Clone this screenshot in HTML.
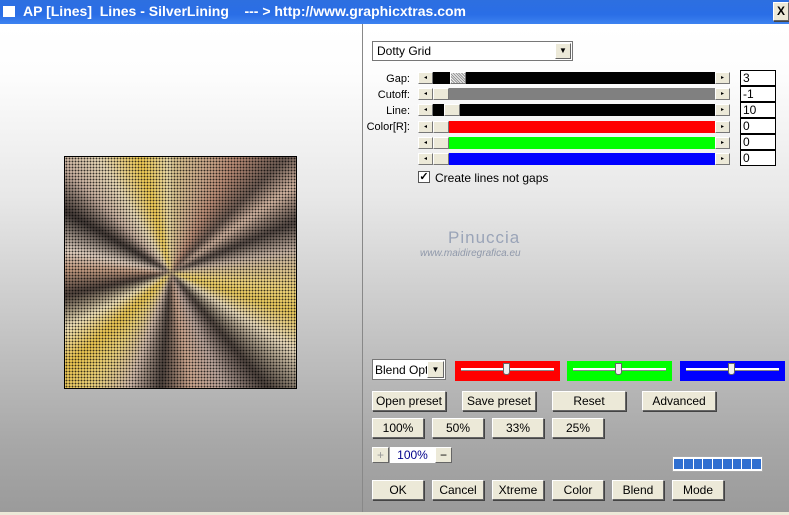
<!DOCTYPE html>
<html><head><style>
*{margin:0;padding:0;box-sizing:border-box}
body{width:789px;height:515px;overflow:hidden;font-family:"Liberation Sans",sans-serif;font-size:11px;position:relative;background:#999}
.abs{position:absolute}
#title{left:0;top:0;width:789px;height:24px;background:linear-gradient(#2d6fe0,#2a6ee6 60%,#3d82f0);color:#fff;font-size:14px;font-weight:bold}
.panel{top:24px;height:491px;background:linear-gradient(#fff 0%,#fdfdfd 10%,#e8e8e8 35%,#c8c8c8 60%,#a8a8a8 85%,#9a9a9a 100%)}
#img{left:64px;top:156px;width:233px;height:233px;border:1px solid #000;overflow:hidden;
background:#e0cfb0}
#img:before{content:"";position:absolute;inset:-4px;filter:blur(1.5px);background:conic-gradient(from 0deg at 46% 50%,
#d9c58f 0deg,#c9a78a 18deg,#b78a74 30deg,#6b5a52 45deg,#d2b4a0 55deg,#4e4440 68deg,#c7b3a3 80deg,#eed27a 98deg,#e6c65a 108deg,#e8d9bb 122deg,#4a403b 140deg,#b8a39a 155deg,#caa48c 170deg,#4a403b 185deg,#cfb8a8 200deg,#e8cf7a 215deg,#e7c24d 228deg,#efe0b8 242deg,#4b3f3a 258deg,#c29a80 272deg,#e0cfc0 282deg,#3d3532 300deg,#c8b0a0 315deg,#e6d7b5 328deg,#ecc750 345deg,#e8dab0 360deg)}
#img:after{content:"";position:absolute;inset:0;background:radial-gradient(circle,rgba(0,0,0,.75) 0.7px,transparent 1.1px) 0 0/3px 3px}
.lbl{text-align:right;width:60px;left:350px;font-size:11px}
.trk{left:418px;width:312px;height:12px}
.arr{width:15px;height:12px;background:#ece9d8;border:1px solid;border-color:#fff #777 #777 #fff;top:0;font-size:6px;text-align:center;line-height:10px}
.thumb{top:0;height:12px;width:16px;background:#ece9d8;border:1px solid;border-color:#fff #777 #777 #fff}
.tb{left:740px;width:36px;height:16px;background:#fff;border:1px solid #000;font-size:12px;padding-left:2px;line-height:14px}
.btn{height:20px;background:#ece9d8;border:1px solid;border-color:#fff #666 #666 #fff;box-shadow:1px 1px 0 #444;text-align:center;font-size:12px;line-height:18px}
.cs{height:20px;top:361px}
.cs i{position:absolute;left:6px;right:6px;top:7px;height:3px;background:#fff;border-bottom:1px solid #888}
.cs b{position:absolute;top:2px;width:7px;height:12px;background:#eee;border:1px solid #666;border-radius:0 0 3px 3px}
</style></head><body>
<div id="title" class="abs"><div class="abs" style="left:3px;top:6px;width:12px;height:11px;background:#fff"></div><div class="abs" style="left:23px;top:3px">AP [Lines]&nbsp; Lines - SilverLining &nbsp;&nbsp; --- &gt; http://www.graphicxtras.com</div>
<div class="abs btn" style="left:773px;top:2px;width:16px;height:19px;font-weight:bold;font-size:12px;color:#000;line-height:17px">X</div></div>
<div class="panel abs" style="left:0;width:362px"></div>
<div class="abs" style="left:362px;top:24px;width:1px;height:491px;background:#888"></div>
<div class="panel abs" style="left:363px;width:426px"></div>
<div id="img" class="abs"></div>

<div class="abs" style="left:372px;top:41px;width:201px;height:20px;background:#fff;border:1px solid #777;font-size:12px;padding:2px 4px">Dotty Grid
<div class="abs btn" style="right:1px;top:1px;width:16px;height:16px;font-size:8px;line-height:14px;box-shadow:none">▼</div></div>

<div class="abs lbl" style="top:73px">Gap:</div>
<div class="abs lbl" style="top:89px">Cutoff:</div>
<div class="abs lbl" style="top:105px">Line:</div>
<div class="abs lbl" style="top:121px">Color[R]:</div>

<div class="abs trk" style="top:72px;background:#000"><div class="abs arr" style="left:0">◂</div><div class="abs thumb" style="left:32px;background:repeating-linear-gradient(45deg,#999 0 1px,#eee 1px 2px)"></div><div class="abs arr" style="right:0">▸</div></div>
<div class="abs trk" style="top:88px;background:#808080"><div class="abs arr" style="left:0">◂</div><div class="abs thumb" style="left:15px"></div><div class="abs arr" style="right:0">▸</div></div>
<div class="abs trk" style="top:104px;background:#000"><div class="abs arr" style="left:0">◂</div><div class="abs thumb" style="left:26px"></div><div class="abs arr" style="right:0">▸</div></div>
<div class="abs trk" style="top:121px;background:#f00"><div class="abs arr" style="left:0">◂</div><div class="abs thumb" style="left:15px"></div><div class="abs arr" style="right:0">▸</div></div>
<div class="abs trk" style="top:137px;background:#0f0"><div class="abs arr" style="left:0">◂</div><div class="abs thumb" style="left:15px"></div><div class="abs arr" style="right:0">▸</div></div>
<div class="abs trk" style="top:153px;background:#00f"><div class="abs arr" style="left:0">◂</div><div class="abs thumb" style="left:15px"></div><div class="abs arr" style="right:0">▸</div></div>

<div class="abs tb" style="top:70px">3</div>
<div class="abs tb" style="top:86px">-1</div>
<div class="abs tb" style="top:102px">10</div>
<div class="abs tb" style="top:118px">0</div>
<div class="abs tb" style="top:134px">0</div>
<div class="abs tb" style="top:150px">0</div>

<div class="abs" style="left:418px;top:171px;width:12px;height:12px;background:#fff;border:1px solid #555;font-size:11px;line-height:10px;text-align:center;font-weight:bold">✓</div>
<div class="abs" style="left:435px;top:171px;font-size:12px">Create lines not gaps</div>

<div class="abs" style="left:448px;top:228px;font-size:17px;color:#9aa4b8;letter-spacing:1px">Pinuccia</div>
<div class="abs" style="left:420px;top:248px;font-size:10px;color:#8f98aa;font-style:italic">www.maidiregrafica.eu</div>

<div class="abs" style="left:372px;top:359px;width:74px;height:21px;background:#fff;border:1px solid #777;font-size:12px;padding:3px 2px;overflow:hidden;white-space:nowrap">Blend Opti
<div class="abs btn" style="right:1px;top:1px;width:17px;height:17px;font-size:8px;line-height:15px;box-shadow:none">▼</div></div>
<div class="abs cs" style="left:455px;width:105px;background:#f00"><i></i><b style="left:48px"></b></div>
<div class="abs cs" style="left:567px;width:105px;background:#0f0"><i></i><b style="left:48px"></b></div>
<div class="abs cs" style="left:680px;width:105px;background:#00f"><i></i><b style="left:48px"></b></div>

<div class="abs btn" style="left:372px;top:391px;width:74px">Open preset</div>
<div class="abs btn" style="left:462px;top:391px;width:74px">Save preset</div>
<div class="abs btn" style="left:552px;top:391px;width:74px">Reset</div>
<div class="abs btn" style="left:642px;top:391px;width:74px">Advanced</div>

<div class="abs btn" style="left:372px;top:418px;width:52px">100%</div>
<div class="abs btn" style="left:432px;top:418px;width:52px">50%</div>
<div class="abs btn" style="left:492px;top:418px;width:52px">33%</div>
<div class="abs btn" style="left:552px;top:418px;width:52px">25%</div>

<div class="abs btn" style="left:372px;top:447px;width:17px;height:16px;line-height:14px;color:#999;box-shadow:none">+</div>
<div class="abs" style="left:390px;top:447px;width:45px;height:16px;background:#fff;color:#00008b;font-size:12px;text-align:center;line-height:16px">100%</div>
<div class="abs btn" style="left:435px;top:447px;width:17px;height:16px;line-height:14px;box-shadow:none">−</div>

<div class="abs" style="left:672px;top:456px;width:91px;height:16px;background:#fff;border:1px solid #aaa;padding:2px 1px;display:flex;gap:1px">
<span style="flex:1;background:#2f6fd0"></span><span style="flex:1;background:#2f6fd0"></span><span style="flex:1;background:#2f6fd0"></span><span style="flex:1;background:#2f6fd0"></span><span style="flex:1;background:#2f6fd0"></span><span style="flex:1;background:#2f6fd0"></span><span style="flex:1;background:#2f6fd0"></span><span style="flex:1;background:#2f6fd0"></span><span style="flex:1;background:#2f6fd0"></span></div>

<div class="abs btn" style="left:372px;top:480px;width:52px">OK</div>
<div class="abs btn" style="left:432px;top:480px;width:52px">Cancel</div>
<div class="abs btn" style="left:492px;top:480px;width:52px">Xtreme</div>
<div class="abs btn" style="left:552px;top:480px;width:52px">Color</div>
<div class="abs btn" style="left:612px;top:480px;width:52px">Blend</div>
<div class="abs btn" style="left:672px;top:480px;width:52px">Mode</div>
<div class="abs" style="left:0;top:512px;width:789px;height:3px;background:#ece9d8"></div>
</body></html>
